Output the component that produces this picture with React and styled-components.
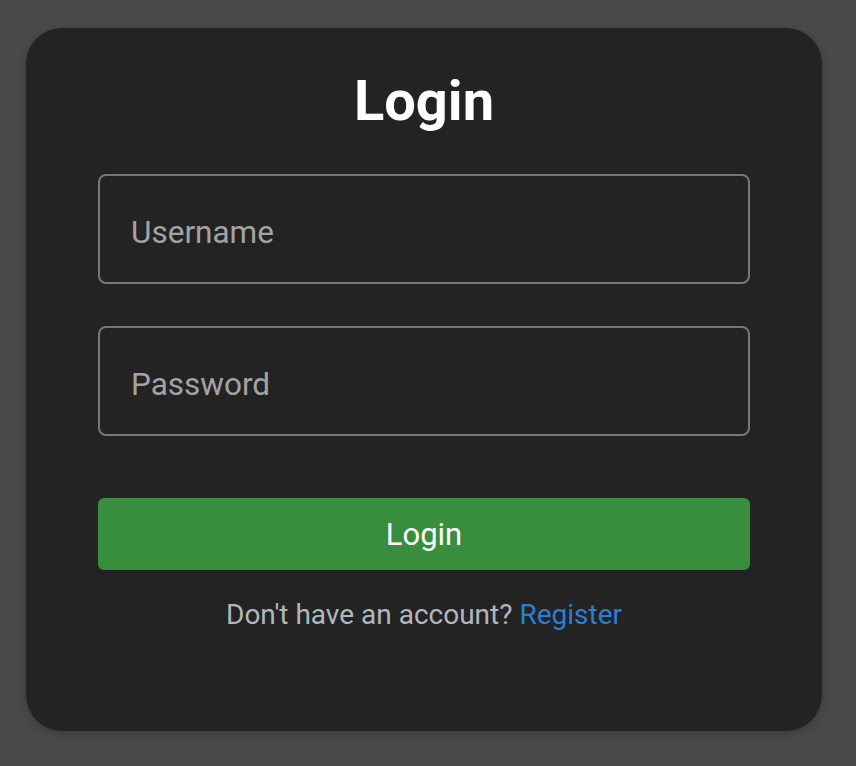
import React from "react";
import styled, { createGlobalStyle } from "styled-components";

const Global = createGlobalStyle`
  html, body { margin: 0; padding: 0; background: #4a4a4a; }
  body { font-family: Roboto, "Liberation Sans", sans-serif; }
  * { box-sizing: border-box; }
`;

const Page = styled.div`
  min-height: 766px;
  padding: 28px 34px 35px 26px;
  display: flex;
  align-items: flex-start;
`;

const Card = styled.div`
  width: 796px;
  height: 703px;
  background: #232323;
  border-radius: 36px;
  box-shadow: 0 2px 10px rgba(0, 0, 0, 0.25);
  padding: 38px 72px 0;
  display: flex;
  flex-direction: column;
`;

const Title = styled.h1`
  margin: 0 0 38px;
  text-align: center;
  color: #ffffff;
  font-size: 56px;
  font-weight: 700;
  line-height: 70px;
`;

const Input = styled.input`
  width: 100%;
  height: 110px;
  flex-shrink: 0;
  margin-bottom: ${(p) => p.$gap}px;
  background: transparent;
  border: 2px solid #777777;
  border-radius: 8px;
  padding: 6px 31px 0;
  font-family: Roboto, "Liberation Sans", sans-serif;
  font-size: 31.5px;
  color: #ffffff;
  outline: none;
  &::placeholder { color: #a3a3a3; }
`;

const Button = styled.button`
  width: 100%;
  height: 72px;
  flex-shrink: 0;
  background: #388e3c;
  border: none;
  border-radius: 6px;
  color: #ffffff;
  font-family: Roboto, "Liberation Sans", sans-serif;
  font-size: 31px;
  font-weight: 400;
  cursor: pointer;
`;

const Footer = styled.p`
  margin: 28px 0 0;
  text-align: center;
  color: #b0b8bf;
  font-size: 28px;
  line-height: 34px;
`;

const Link = styled.a`
  color: #2a7fd4;
  text-decoration: none;
`;

export default function App() {
  return (
    <>
      <Global />
      <Page>
        <Card>
          <Title>Login</Title>
          <Input placeholder="Username" $gap={42} />
          <Input placeholder="Password" $gap={62} />
          <Button>Login</Button>
          <Footer>
            Don't have an account? <Link href="#">Register</Link>
          </Footer>
        </Card>
      </Page>
    </>
  );
}
